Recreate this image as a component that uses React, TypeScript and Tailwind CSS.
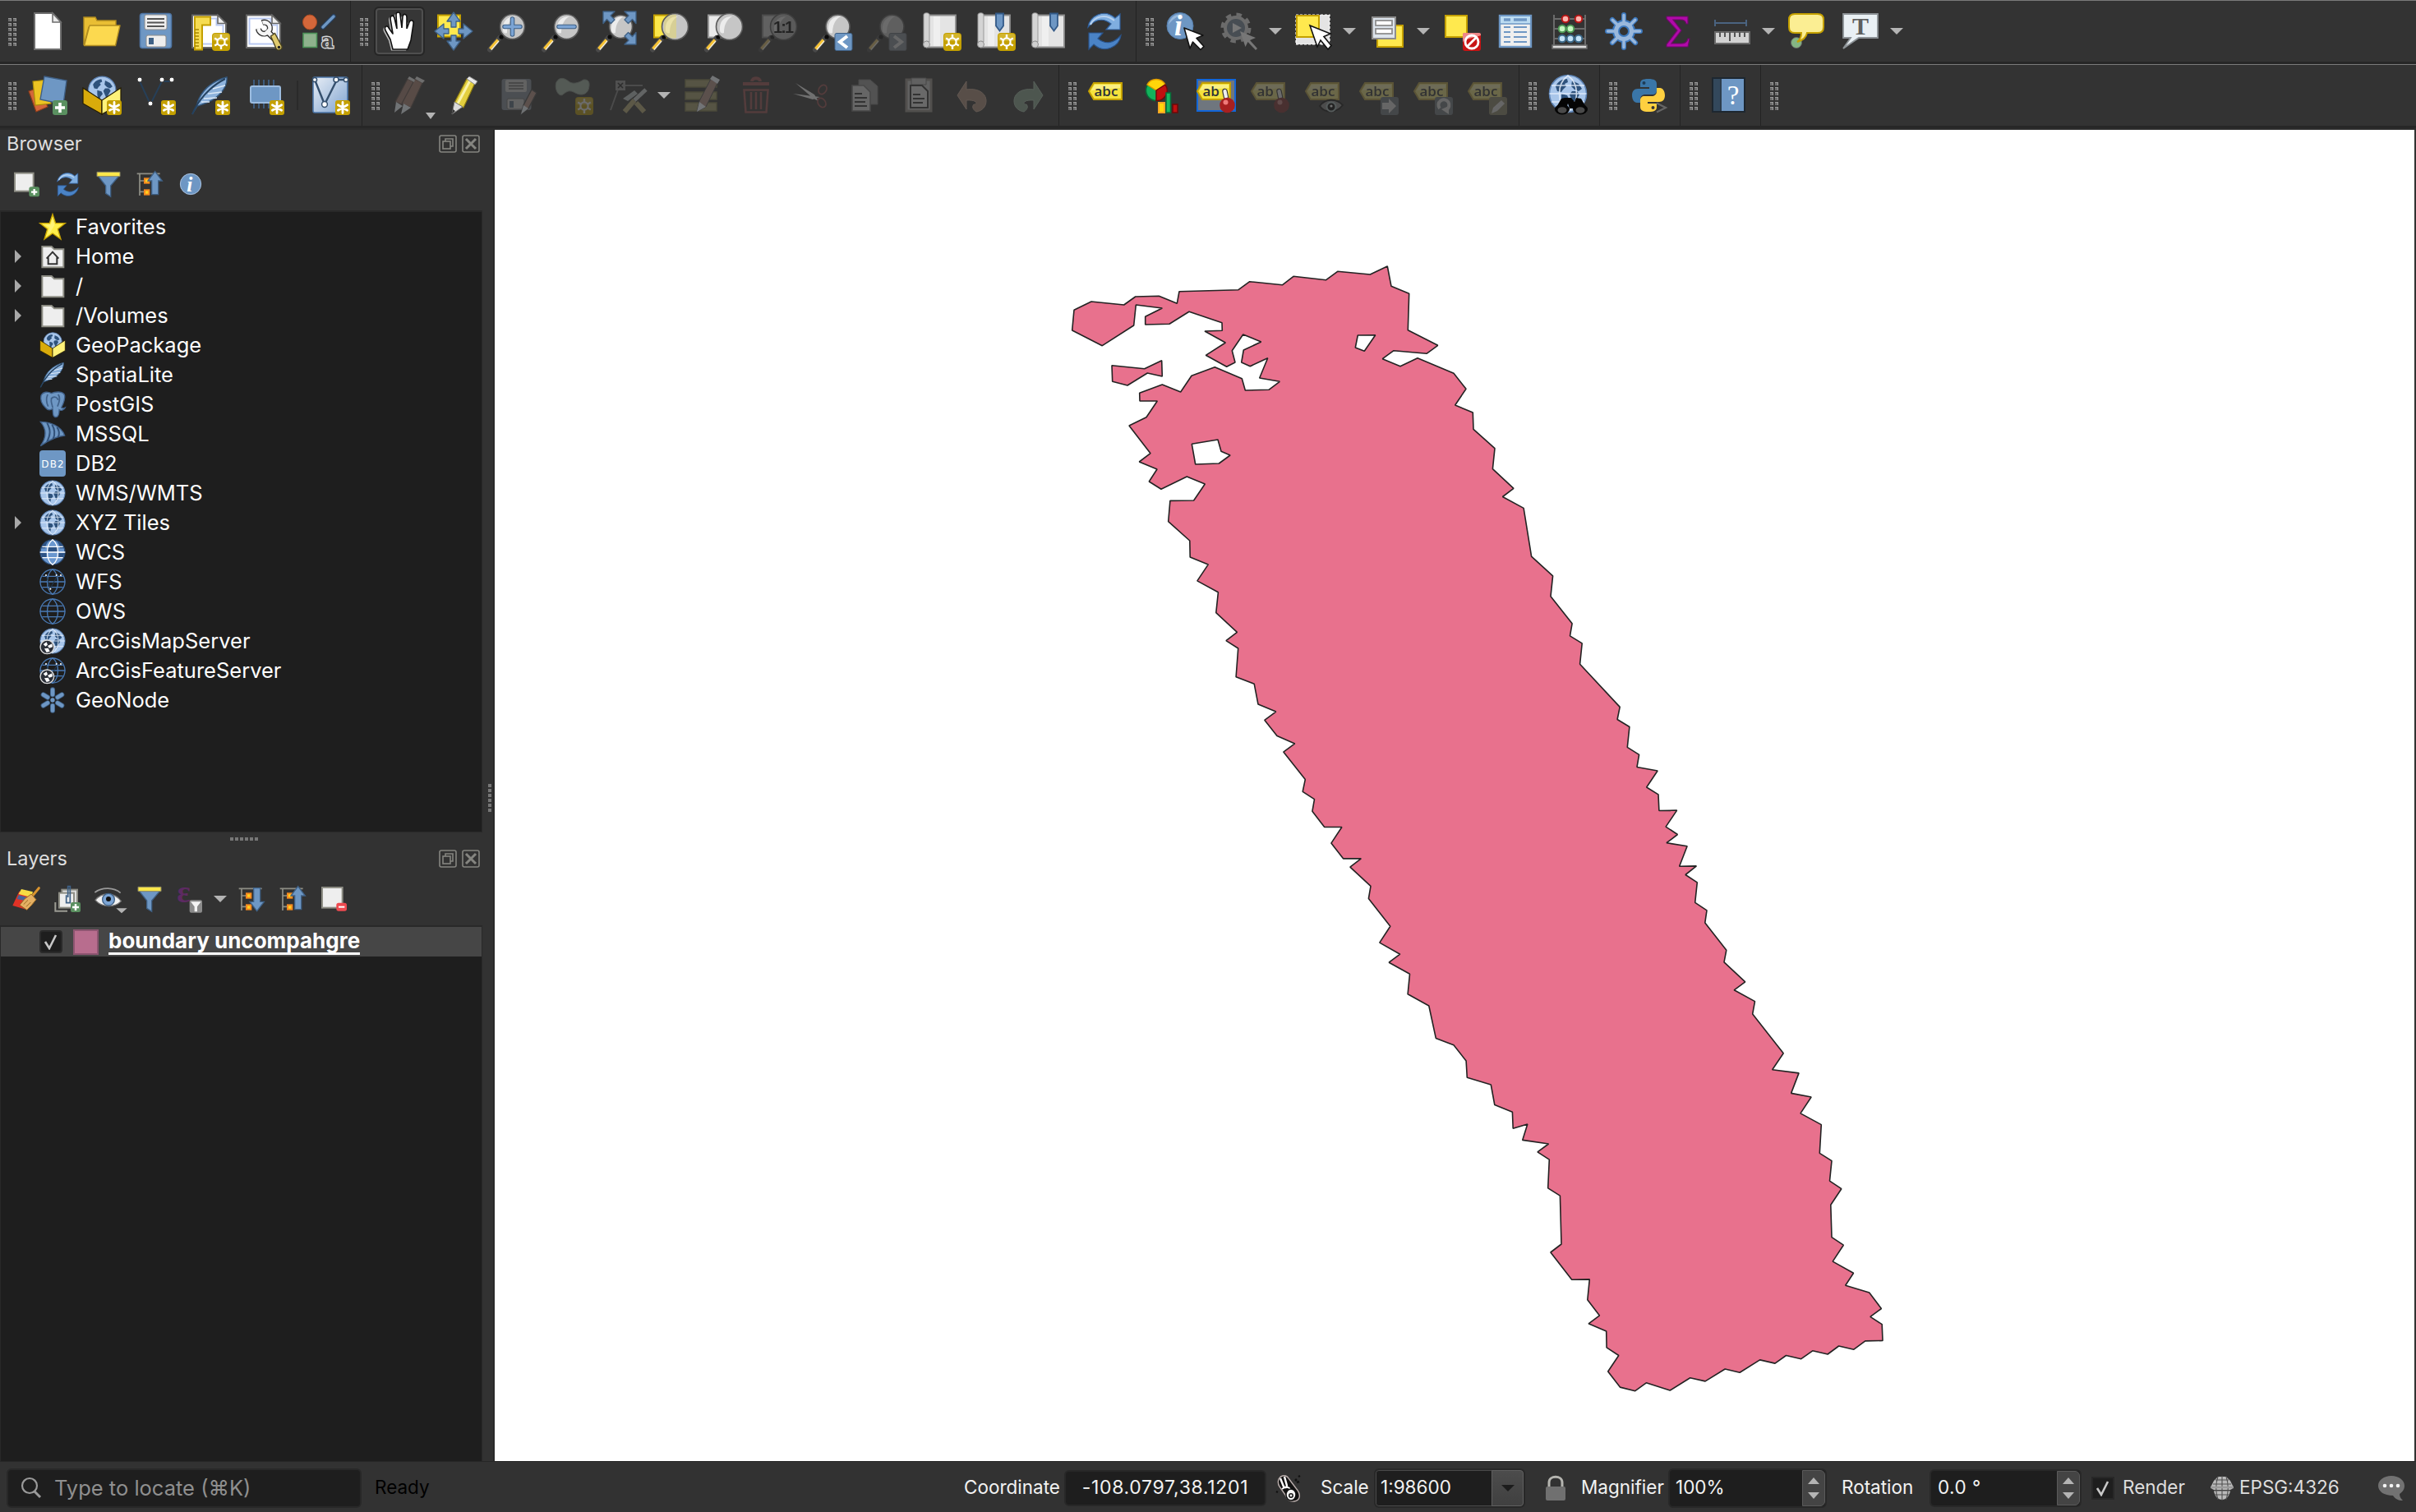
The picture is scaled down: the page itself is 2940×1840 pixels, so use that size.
import React from "react";

type P = { size?: number };
type Pt = [number, number];

const Svg = ({ size = 48, dim = false, children }: { size?: number; dim?: boolean; children: React.ReactNode }) => (
  <svg width={size} height={size} viewBox="0 0 48 48" className={dim ? "shrink-0 overflow-visible opacity-30 grayscale-[40%]" : "shrink-0 overflow-visible"} fill="none">
    {children}
  </svg>
);

/* ---------- shared icon parts ---------- */

const StarBadge = () => (
  <g>
    <rect x="30" y="30" width="18" height="18" rx="3" fill="#c4a000" />
    <path d="M39 32.5v13M33.4 35.8l11.2 6.4M33.4 42.2l11.2-6.4" stroke="#fff" strokeWidth="2.8" strokeLinecap="round" />
  </g>
);

const GearBadge = () => (
  <g>
    <rect x="26" y="26" width="22" height="22" rx="4" fill="#c4a000" />
    <rect x="27" y="27" width="20" height="9" rx="3" fill="#d3b52c" />
    <circle cx="37" cy="37" r="4.6" stroke="#fff" strokeWidth="2.2" />
    <path d="M37 28v5M37 41v5M29.2 32.5l4.3 2.5M40.5 39l4.3 2.5M29.2 41.5l4.3-2.5M40.5 35l4.3-2.5" stroke="#fff" strokeWidth="2.4" />
  </g>
);

const PlusBadge = () => (
  <g>
    <rect x="30" y="30" width="18" height="18" rx="3" fill="#5a9060" />
    <path d="M39 33v12M33 39h12" stroke="#fff" strokeWidth="3.6" />
  </g>
);

const Lens = ({ r = 15, fill = "#c6c6c6" }: { r?: number; fill?: string }) => (
  <g>
    <path d="M2 46.5L14 32" stroke="#494949" strokeWidth="6" strokeLinecap="round" />
    <path d="M2.5 45.5L12 34.5" stroke="#f7c335" strokeWidth="3.6" />
    <path d="M4 46.5L13 36" stroke="#f4f0e0" strokeWidth="1.2" />
    <circle cx="16" cy="31" r="2.6" fill="#0b0b0b" />
    <circle cx="29.5" cy="18.5" r={r} fill={fill} stroke="#5a5a5a" strokeWidth="1.6" />
    <path d="M18 23C17 12 23 6 33 6C27 9 23 16 23 26C21 27 18 26 18 23Z" fill="#f2f2f2" opacity=".85" />
  </g>
);

const Cursor = () => (
  <path d="M23 20l23 9-8 3.5 9 10-4 4-9.500-9.500-3.500 8z" fill="#fff" stroke="#111" strokeWidth="1.6" strokeLinejoin="round" />
);

const Tag = ({ text = "abc" }: { text?: string }) => (
  <g>
    <path d="M1 19L7 9h34v20H7z" fill="#f5e23c" stroke="#c4a000" strokeWidth="2" />
    <path d="M4 18l4-7h31v4z" fill="#fdf8b0" opacity=".6" />
    <text x="7.500" y="25" fontFamily="'Open Sans'" fontWeight="600" fontSize="17" fill="#2f3338">{text}</text>
  </g>
);

const Continents = ({ fill = "#2e527c" }: { fill?: string }) => (
  <g fill={fill}>
    <path d="M9 15c3-6 8-9 14-9l1 4-4 2 2 3-4 4-2 3-5-1z" />
    <path d="M16 24l7 2 2 4-4 5-1 5-3-2-1-7z" />
    <path d="M29 8l8 4 4 6-4 3-5-2-4-4z" />
    <path d="M29 21l6 0 3 4-4 7-3 5-3-7-2-5z" />
  </g>
);

const Globe = ({ grid = false }: { grid?: boolean }) => (
  <g>
    <circle cx="24" cy="24" r="22.500" fill="#a9c6ea" stroke="#5c82b3" strokeWidth="1.6" />
    <Continents />
    {grid && <path d="M4 14h40M1.500 24h45M4 34h40M24 2c-14 10-14 34 0 44c14-10 14-34 0-44z" stroke="#e6f0fb" strokeWidth="1.6" opacity=".85" />}
  </g>
);

/* ---------- project toolbar ---------- */

const NewFile = () => (
  <Svg>
    <path d="M8 2h22l10 11v33H8z" fill="#fff" stroke="#6e6e6e" strokeWidth="2" />
    <path d="M30 2v11h10z" fill="#e9e9e9" stroke="#6e6e6e" strokeWidth="1.6" />
  </Svg>
);
const OpenFolder = () => (
  <Svg>
    <path d="M2 41V7h14l2 4h23v8H8z" fill="#e9be33" stroke="#b18d20" strokeWidth="1.400" />
    <path d="M9 17h37l-5.500 24.500H2.500z" fill="#fcd94f" stroke="#b18d20" strokeWidth="1.400" strokeLinejoin="round" />
  </Svg>
);
const Save = () => (
  <Svg>
    <rect x="4.500" y="2.500" width="38" height="42" rx="3" fill="#6e97c4" stroke="#4f76a5" strokeWidth="1.600" />
    <rect x="10" y="4" width="27" height="18" rx="2" fill="#eee" stroke="#8a8a8a" />
    <path d="M13 9h21M13 13.500h21M13 18h21" stroke="#555" strokeWidth="1.800" />
    <rect x="12" y="29" width="24" height="14" rx="2" fill="#eee" stroke="#8a8a8a" />
    <rect x="15" y="32" width="6" height="8" fill="#3f6186" />
  </Svg>
);
const SaveEdits = () => (
  <Svg>
    <rect x="2.500" y="4" width="36" height="38" rx="3" fill="#4b4e52" />
    <rect x="7" y="5" width="26" height="15" rx="2" fill="#626262" />
    <path d="M11 9h18M11 12.500h18M11 16h18" stroke="#414141" strokeWidth="1.600" />
    <rect x="9" y="28" width="21" height="13" rx="2" fill="#626262" stroke="#454545" />
    <rect x="12" y="31" width="5" height="8" fill="#3e444a" />
    <path d="M26 47l3-11 10-19 6 4-10 19z" fill="#5c504c" stroke="#3a3a3a" strokeWidth="1.400" />
    <path d="M26 47l3-11 6 4z" fill="#6f7274" />
  </Svg>
);
const LayoutPage = () => (
  <g>
    <path d="M2 4.500h31l10 10V44H2z" fill="#fff" stroke="#666" strokeWidth="2" />
    <path d="M5.500 8.500h26v8h8v23h-34z" stroke="#b9c9f2" strokeWidth="2" />
    <path d="M33 4.500v10h10z" fill="#eee" stroke="#666" strokeWidth="1.600" />
  </g>
);
const NewLayout = () => (
  <Svg>
    <LayoutPage />
    <path d="M5 6.500h19v10H14v30H5z" fill="#f6dc52" stroke="#c4a000" strokeWidth="2" />
    <path d="M5 22h5M5 26h5M5 30h5M5 34h5M5 38h5M5 42h5" stroke="#a58500" strokeWidth="1.500" />
    <GearBadge />
  </Svg>
);
const LayoutManager = () => (
  <Svg>
    <LayoutPage />
    <g strokeLinecap="butt">
      <path d="M21 13.500a7 7 0 1 1-4.500 7.500" stroke="#333" strokeWidth="7" />
      <path d="M27 24l9 9" stroke="#333" strokeWidth="8" />
      <path d="M21.500 13.500a7 7 0 1 1-5 6.500" stroke="#f5f5f5" strokeWidth="4.400" />
      <path d="M26 23l10 10" stroke="#f5f5f5" strokeWidth="5" />
    </g>
    <path d="M31.500 30l5-3.500 8.500 16c1 4-5 6-7 2.500z" fill="#dfca6e" stroke="#4a431f" strokeWidth="1.400" />
    <circle cx="41.500" cy="43.500" r="1.800" fill="#222" />
  </Svg>
);
const StyleManager = () => (
  <Svg>
    <ellipse cx="13" cy="13" rx="8.500" ry="9" fill="#d4673a" stroke="#a84a22" />
    <path d="M29 19L42 6" stroke="#27405f" strokeWidth="6" strokeLinecap="round" />
    <path d="M29 19L42 6" stroke="#6e97c4" strokeWidth="3.500" strokeLinecap="round" />
    <rect x="5" y="26.500" width="16.500" height="17" fill="#8fb28d" stroke="#4c9257" strokeWidth="1.600" />
    <text x="27" y="44" fontFamily="'DejaVu Serif'" fontWeight="700" fontSize="25" fill="#444" stroke="#d8d8d8" strokeWidth="2.800" paintOrder="stroke" textLength="15" lengthAdjust="spacingAndGlyphs">a</text>
  </Svg>
);

/* ---------- navigation toolbar ---------- */

const HAND = "M16 46L13 34L7 23C5 18 9 16 11 20L16 27L13 9C13 4 17 4 18 8L21 21L20 4C20 0 25 0 25 4L27 20L28 6C29 2 33 3 33 7L33 21L36 13C38 9 42 11 41 15L38 35L34 46Z";
const Hand = () => (
  <Svg>
    <path d={HAND} fill="#bbb" transform="translate(-2 1.500)" />
    <path d={HAND} fill="#fff" stroke="#111" strokeWidth="1.600" strokeLinejoin="round" />
    <path d="M20 21v3M26.500 20v4M33 21l-.5 4" stroke="#fff" strokeWidth="3.500" />
  </Svg>
);
const Arrow4 = () => (
  <Svg>
    <rect x="5" y="4.500" width="27" height="26" fill="#ffe94e" stroke="#c4a000" strokeWidth="2" />
    <g fill="#6e97c4" stroke="#3f6186" strokeWidth="1.300" strokeLinejoin="round">
      <path d="M24 1l8 11h-5v7h-6v-7h-5z" />
      <path d="M24 47l8-11h-5v-7h-6v7h-5z" />
      <path d="M1 24l11-9v6h6v6h-6v6z" />
      <path d="M47 24l-11-9v6h-6v6h6v6z" />
    </g>
  </Svg>
);
const ZoomIn = () => (
  <Svg>
    <Lens />
    <path d="M29.500 9v19M20 18.500h19" stroke="#3f6186" strokeWidth="5.600" strokeLinecap="round" />
    <path d="M29.500 9v19M20 18.500h19" stroke="#7ba4d4" strokeWidth="3.400" strokeLinecap="round" />
  </Svg>
);
const ZoomOut = () => (
  <Svg>
    <Lens />
    <path d="M20 18.500h19" stroke="#3f6186" strokeWidth="5.600" strokeLinecap="round" />
    <path d="M20 18.500h19" stroke="#7ba4d4" strokeWidth="3.400" strokeLinecap="round" />
  </Svg>
);
const ZoomFull = () => (
  <Svg>
    <Lens r={14} />
    <g fill="#6e97c4" stroke="#3f6186" strokeWidth="1.300" strokeLinejoin="round">
      <path d="M8 0h14l-5 5 5 5-4.500 4.500-5-5-4.500 5z" />
      <path d="M48 0H34l5 5-5 5 4.500 4.500 5-5 4.500 5z" />
      <path d="M48 40H34l5-5-5-5 4.500-4.500 5 5 4.500-5z" />
    </g>
  </Svg>
);
const ZoomSel = () => (
  <Svg>
    <rect x="4" y="4.500" width="27" height="27" fill="#fbe74b" stroke="#c4a000" strokeWidth="2" />
    <Lens r={16} />
    <path d="M16 12c3-7 9-9 15-8v28c-6 2-13-1-15-8z" fill="#ead95c" opacity=".45" />
  </Svg>
);
const ZoomLayer = () => (
  <Svg>
    <rect x="4" y="4.500" width="27" height="27" fill="#eaeaea" stroke="#999" strokeWidth="2" />
    <Lens r={16} />
  </Svg>
);
const ZoomNative = () => (
  <Svg dim>
    <rect x="4" y="4.500" width="27" height="27" fill="#ccc" stroke="#888" strokeWidth="2" />
    <Lens r={16} fill="#b5b5b5" />
    <text x="17" y="26" fontFamily="'Liberation Sans'" fontWeight="700" fontSize="20" fill="#000" textLength="25">1:1</text>
  </Svg>
);
const ZoomLast = () => (
  <Svg>
    <Lens r={14.5} />
    <rect x="26" y="26.500" width="21" height="21" rx="2" fill="#6e97c4" stroke="#3f6186" />
    <path d="M41 30l-9 7 9 7" stroke="#fff" strokeWidth="4" />
  </Svg>
);
const ZoomNext = () => (
  <Svg dim>
    <Lens r={14.5} />
    <rect x="26" y="26.500" width="21" height="21" rx="2" fill="#7c8da0" stroke="#5f6b78" />
    <path d="M32 30l9 7-9 7" stroke="#ddd" strokeWidth="4" />
  </Svg>
);
const MapSheet = () => (
  <g>
    <path d="M8 4.500h33v39H6z" fill="#e4e4e4" stroke="#8e8e8e" strokeWidth="1.800" />
    <path d="M2 4c0-3 7-3 7 0v33c-4-2-7 0-7 4z" fill="#d4d4d4" stroke="#999" />
    <circle cx="5.500" cy="40" r="4" fill="#cfcfcf" stroke="#8e8e8e" />
    <path d="M14 6h8v36h-8z" fill="#f3f3f3" opacity=".7" />
  </g>
);
const Ribbon = () => <path d="M24 2.500h9v15l-4.500 6-4.500-6z" fill="#6e97c4" stroke="#335a88" strokeWidth="1.800" />;
const NewMapView = () => <Svg><MapSheet /><GearBadge /></Svg>;
const NewBookmark = () => <Svg><MapSheet /><Ribbon /><GearBadge /></Svg>;
const Bookmarks = () => <Svg><MapSheet /><Ribbon /></Svg>;
const Refresh = ({ size }: P) => (
  <Svg size={size}>
    <path d="M4 19C6 5 24-4 37 8l6-5v19H26l6-7C22 7 12 10 4 19z" fill="#7faee0" stroke="#2f5f9c" strokeWidth="1.200" />
    <path d="M44 29C42 43 24 52 11 40l-6 6V26h17l-6 7c10 8 20 5 28-4z" fill="#4a83c6" stroke="#2a548c" strokeWidth="1.200" />
    <path d="M7 16C12 6 25 2 36 11" stroke="#b9d3f0" strokeWidth="2" />
  </Svg>
);

/* ---------- attributes toolbar ---------- */

const Identify = () => (
  <Svg>
    <circle cx="18" cy="17.500" r="16" fill="#6e97c4" stroke="#557fae" />
    <path d="M4 16C6 6 14 2 22 4C14 6 8 10 4 16z" fill="#a9c6e6" opacity=".7" />
    <text x="11" y="29" fontFamily="'Liberation Serif'" fontWeight="700" fontStyle="italic" fontSize="35" fill="#fff">i</text>
    <Cursor />
  </Svg>
);
const InfoIcon = ({ size }: P) => (
  <Svg size={size}>
    <circle cx="24" cy="24" r="19" fill="#6e97c4" stroke="#a8c1de" strokeWidth="1.500" />
    <text x="17" y="37" fontFamily="'Liberation Serif'" fontWeight="700" fontStyle="italic" fontSize="38" fill="#fff">i</text>
  </Svg>
);
const RunAction = () => (
  <Svg>
    <circle cx="20" cy="20" r="13" fill="#474d53" stroke="#6b6b6b" strokeWidth="4" />
    <circle cx="20" cy="20" r="16.500" stroke="#6b6b6b" strokeWidth="4" strokeDasharray="6.500 6.460" />
    <path d="M16 14l11 6-11 6z" fill="#777" />
    <path d="M25 24l19 8-7 3 9 10-2 2-9.500-10-3 6z" fill="#777" />
  </Svg>
);
const SelectRect = () => (
  <Svg>
    <rect x="3" y="4" width="41" height="36" fill="#e4e4e4" stroke="#fff" strokeWidth="1.200" strokeDasharray="3 2" />
    <rect x="4" y="5" width="27" height="26" fill="#ffe94e" stroke="#c4a000" strokeWidth="2" />
    <path d="M20 17l25 10-8 3.500 9 11-4 4.500-9-11-4 8z" fill="#fff" stroke="#111" strokeWidth="1.600" />
  </Svg>
);
const SelectForm = () => (
  <Svg>
    <rect x="12" y="17" width="31" height="26" fill="#ffe94e" stroke="#c4a000" strokeWidth="2" />
    <rect x="6" y="7" width="28" height="26" fill="#dde4ec" stroke="#8e8e8e" strokeWidth="2" />
    <rect x="10" y="11" width="20" height="6" fill="#fff" stroke="#8e8e8e" strokeWidth="1.800" />
    <rect x="10" y="21" width="20" height="6" fill="#fff" stroke="#8e8e8e" strokeWidth="1.800" />
  </Svg>
);
const Deselect = () => (
  <Svg>
    <rect x="5" y="5" width="26" height="26" fill="#ffe94e" stroke="#c4a000" strokeWidth="2" />
    <rect x="26" y="26" width="22" height="22" rx="3" fill="#c81414" />
    <path d="M26 37c6-5 15-5 22-8v-1a2 2 0 0 0-2-2H28a2 2 0 0 0-2 2z" fill="#e88" />
    <circle cx="37" cy="37" r="8" stroke="#fff" strokeWidth="2.800" />
    <path d="M31.500 42.500l11-11" stroke="#fff" strokeWidth="2.800" />
  </Svg>
);
const Table = () => (
  <Svg>
    <rect x="5" y="5" width="38" height="38" fill="#efefef" stroke="#6e97c4" strokeWidth="2.400" />
    <rect x="6" y="6" width="36" height="9" fill="#bcdcf2" />
    <path d="M5 15h38" stroke="#6e97c4" strokeWidth="1.600" />
    <path d="M10 10h8M22 10h16" stroke="#6e97c4" strokeWidth="3.600" />
    <path d="M10 19h8M22 19h16M10 25h8M22 25h16M10 31h8M22 31h16M10 37h8M22 37h16" stroke="#6e97c4" strokeWidth="2" />
  </Svg>
);
const Abacus = () => (
  <Svg>
    <path d="M5 4v38M43 4v38M5 9h38M5 21h38M5 33h38" stroke="#6b6b6b" strokeWidth="2" />
    <rect x="3" y="41" width="42" height="4" fill="#ddd" stroke="#6b6b6b" strokeWidth="1.600" />
    <g strokeWidth="2">
      <circle cx="19" cy="9" r="4.300" fill="#ffb3ad" stroke="#b51616" />
      <circle cx="35" cy="9" r="4.300" fill="#ffb3ad" stroke="#b51616" />
      <circle cx="15" cy="21" r="4.300" fill="#c5f7c0" stroke="#4f9a55" />
      <circle cx="25" cy="21" r="4.300" fill="#c5f7c0" stroke="#4f9a55" />
      <circle cx="15" cy="33" r="4.300" fill="#c4e2f6" stroke="#3d6a8a" />
      <circle cx="25" cy="33" r="4.300" fill="#c4e2f6" stroke="#3d6a8a" />
      <circle cx="35" cy="33" r="4.300" fill="#c4e2f6" stroke="#3d6a8a" />
    </g>
  </Svg>
);
const Gear = () => (
  <Svg>
    <path d="M24 4v40M4 24h40M9.900 9.900l28.200 28.200M38.100 9.900L9.900 38.100" stroke="#3c78bd" strokeWidth="6" strokeLinecap="round" />
    <circle cx="24" cy="24" r="13" fill="#9ab8dc" stroke="#3c78bd" strokeWidth="2" />
    <path d="M24 4.500v39M4.500 24h39M10.200 10.200l27.600 27.600M37.800 10.200L10.200 37.800" stroke="#9ab8dc" strokeWidth="3.400" strokeLinecap="round" />
    <circle cx="24" cy="24" r="6" fill="#333" stroke="#3c78bd" strokeWidth="2" />
  </Svg>
);
const Sigma = () => (
  <Svg>
    <path d="M10 6h26v9h-2c-1-4-3-5-7-5H18l10 13-12 16h12c5 0 7-2 8-6h2l-2 10H10v-3l13-17L10 9z" fill="#b10aa9" stroke="#6d0a68" strokeWidth="1.200" />
  </Svg>
);
const Ruler = () => (
  <Svg>
    <path d="M3 10v8M41 10v8M3 14h38" stroke="#4a6380" strokeWidth="2" />
    <rect x="3" y="25" width="42" height="14" fill="#d2d2d2" stroke="#6b6b6b" strokeWidth="2" />
    <path d="M9 25v6M15 25v6M21 25v11M27 25v6M33 25v6M39 25v6" stroke="#555" strokeWidth="2" />
  </Svg>
);
const MapTip = () => (
  <Svg>
    <circle cx="12" cy="38" r="6.500" fill="#85b684" stroke="#666" />
    <path d="M10 3h28q7 0 7 7v9q0 7-7 7H25c-1 5-5 9-12 11 4-3 5-7 5-11h-8q-7 0-7-7v-9q0-7 7-7z" fill="#fbee93" stroke="#c4a000" strokeWidth="2" />
  </Svg>
);
const TextAnnotation = () => (
  <Svg>
    <path d="M3 3h42v29H22L3 45l9-13H3z" fill="#e9f0f4" stroke="#8c9296" strokeWidth="1.800" />
    <text x="24" y="28" textAnchor="middle" fontFamily="'Liberation Serif'" fontWeight="700" fontSize="30" fill="#5e5e5e">T</text>
  </Svg>
);

/* ---------- second toolbar row ---------- */

const DataSource = () => (
  <Svg>
    <path d="M1 19l14-5 9 24-14 6z" fill="#d4673a" stroke="#8e3d1b" strokeWidth="1.200" />
    <path d="M6 7l19-2 3 29-19 2z" fill="#ecc423" stroke="#a88a0a" strokeWidth="1.200" />
    <path d="M20 1l27 5-4 29-28-6z" fill="#6e97c4" stroke="#3f5f85" strokeWidth="1.400" />
    <PlusBadge />
  </Svg>
);
const GeoPackage = ({ size, badge = false }: P & { badge?: boolean }) => (
  <Svg size={size}>
    <g transform="translate(6.500 0) scale(.74)"><Globe /></g>
    <path d="M1 15l23 15v17L1 34z" fill="#d9ab0b" stroke="#241c00" strokeWidth="1.200" />
    <path d="M47 15L24 30v17l23-13z" fill="#fff27a" stroke="#241c00" strokeWidth="1.200" />
    {badge && <StarBadge />}
  </Svg>
);
const Shapefile = () => (
  <Svg>
    <path d="M4 7l13 28L31 7h12" stroke="#263f58" strokeWidth="2" />
    <g fill="#fff" stroke="#333">
      <circle cx="4" cy="5" r="3" /><circle cx="17" cy="34" r="3" /><circle cx="31" cy="5" r="3" /><circle cx="43" cy="5" r="3" />
    </g>
    <StarBadge />
  </Svg>
);
const Feather = ({ size, badge = false }: P & { badge?: boolean }) => (
  <Svg size={size}>
    <path d="M8 34C12 20 24 7 44 2C45 13 36 28 14 35L8 37C6 40 4 43 2 47" fill="#8db2dc" stroke="#35597f" strokeWidth="1.400" />
    <path d="M2 47C8 32 22 14 42 4" stroke="#24415f" strokeWidth="2" />
    <path d="M16 28l16-1M21 22l17-2M27 16l15-4M13 32l10 0" stroke="#dbe8f6" strokeWidth="1.500" />
    {badge && <StarBadge />}
  </Svg>
);
const MemoryLayer = () => (
  <Svg>
    <path d="M11 5v8M17 5v8M23 5v8M29 5v8M35 5v8M11 34v6M17 34v6M23 34v6M29 34v6" stroke="#3f6186" strokeWidth="1.800" />
    <rect x="7" y="13" width="36" height="20" rx="2" fill="#6e97c4" stroke="#9dbde0" strokeWidth="2" />
    <StarBadge />
  </Svg>
);
const VirtualLayer = () => (
  <Svg>
    <defs>
      <linearGradient id="vl" x1="0" y1="0" x2="1" y2="1"><stop offset="0" stopColor="#e8eef6" /><stop offset="1" stopColor="#7fa3cf" /></linearGradient>
    </defs>
    <rect x="3" y="2" width="42" height="43" rx="2" fill="url(#vl)" stroke="#4c76a8" strokeWidth="1.600" />
    <path d="M5 5l12 30L32 5h12" stroke="#35506e" strokeWidth="2.400" />
    <g fill="#fff" stroke="#35506e" strokeWidth="1.500">
      <circle cx="5" cy="5" r="2.600" /><circle cx="17" cy="35" r="3.400" /><circle cx="31" cy="5" r="3" /><circle cx="43" cy="5" r="2.600" />
    </g>
    <StarBadge />
  </Svg>
);
const EditsMenu = () => (
  <>
    <Svg>
      <g stroke="#403b39" strokeWidth="1.200">
        <path d="M5 32L20 4l8 4-13 28z" fill="#564a46" />
        <path d="M13 34L29 4l9 5-14 30z" fill="#584b46" />
      </g>
      <path d="M20 4l2-3 7 4-1 3zM29 4l2-3 10 5-3 3z" fill="#6e6e6e" />
      <path d="M4 45l2-13 8 5zM12 47l3-13 9 5z" fill="#707375" />
    </Svg>
    <span className="absolute bottom-0 right-[3px] border-x-[6px] border-t-[8px] border-x-transparent border-t-[#b4b4b4]" />
  </>
);
const Pencil = () => (
  <Svg>
    <path d="M11 33L26 4l10 5-14 30z" fill="#e3cf3f" stroke="#8d7b10" strokeWidth="1.200" />
    <path d="M15 34L30 6" stroke="#f9f3a8" strokeWidth="3" />
    <path d="M26 4l3-3 10 6-3 4z" fill="#e8e8e8" stroke="#888" />
    <path d="M8 47l3-15 10 6z" fill="#dcdcdc" stroke="#777" />
    <path d="M8 47l1-6 3 2z" fill="#333" />
  </Svg>
);
const AddFeature = () => (
  <Svg>
    <path d="M3 8c4-7 10-5 15-1s12 2 18-2c8-1 8 6 6 12s-9 8-16 4-10-2-15 2-11-7-8-15z" fill="#545a55" stroke="#4b4f4c" />
    <g opacity=".28"><GearBadge /></g>
  </Svg>
);
const VertexTool = () => (
  <Svg>
    <path d="M12 17L3 42M19 12h23" stroke="#4b4b4b" strokeWidth="2" />
    <rect x="9" y="6" width="12" height="12" fill="#505050" />
    <path d="M12 9l6 6M18 9l-6 6" stroke="#2d2d2d" strokeWidth="1.600" />
    <path d="M20 44l12-14" stroke="#5c5847" strokeWidth="6" />
    <path d="M32 30l14-13" stroke="#626464" strokeWidth="5" />
    <path d="M34 33l10 11" stroke="#5c5847" strokeWidth="6" />
    <path d="M18 28l14-10 4 4-12 9z" fill="#5d6060" />
  </Svg>
);
const ModifyAttrs = () => (
  <Svg>
    <g fill="#565444" stroke="#4b4a3a" strokeWidth="1.500"><path d="M4 5h38v9H4zM4 20h38v9H4zM4 33h38v10H4z" /></g>
    <path d="M18 44l3-13L35 4l8 5-14 29z" fill="#5b504c" stroke="#3b3b3b" />
    <path d="M34 4l3-4 9 5-3 5zM18 44l3-12 8 6z" fill="#727476" />
  </Svg>
);
const Trash = () => (
  <Svg>
    <path d="M8 10h32M19 7c0-5 10-5 10 0" stroke="#533c3c" strokeWidth="4" />
    <path d="M9.500 17.500h29l-2 27h-25zM18 20v21M24 20v21M30 20v21" stroke="#533c3c" strokeWidth="2.600" />
  </Svg>
);
const Cut = () => (
  <Svg>
    <path d="M3 22l24 3 9 1-9 3zM6 9l23 14 5 8-6-3z" fill="#707070" />
    <ellipse cx="39" cy="17" rx="4.500" ry="6" transform="rotate(35 39 17)" stroke="#533c3c" strokeWidth="1.800" />
    <ellipse cx="38" cy="33" rx="4.500" ry="6" transform="rotate(-35 38 33)" stroke="#533c3c" strokeWidth="1.800" />
  </Svg>
);
const Copy = () => (
  <Svg dim>
    <path d="M17 5h14l9 8v22H17z" fill="#999" stroke="#777" />
    <path d="M9 12h14l8 8v23H9z" fill="#ddd" stroke="#777" strokeWidth="1.600" />
    <path d="M12 22h9M12 27h15M12 32h13M12 37h15" stroke="#333" strokeWidth="2.200" />
  </Svg>
);
const Paste = () => (
  <Svg dim>
    <rect x="9" y="5" width="30" height="38" fill="#ccc" stroke="#998f85" strokeWidth="3" />
    <path d="M15 3h18v8H15z" fill="#ccc" stroke="#777" />
    <path d="M14 12h14l7 7v20H14z" fill="#e5e5e5" stroke="#333" strokeWidth="2" />
    <path d="M17 23h9M17 28h14M17 33h12" stroke="#333" strokeWidth="2.200" />
  </Svg>
);
const UndoShape = () => <path d="M5 24L16 7v10c12-2 24 3 24 14 0 7-5 12-12 13-5-3-5-7-3-9 4 1 6-6-9-5v11z" />;
const Undo = () => <Svg><g fill="#584e48" stroke="#625852"><UndoShape /></g></Svg>;
const Redo = () => <Svg><g fill="#4d564f" stroke="#58605a" transform="matrix(-1 0 0 1 48 0)"><UndoShape /></g></Svg>;

const LabelAbc = () => <Svg><Tag /></Svg>;
const Diagram = () => (
  <Svg>
    <circle cx="17" cy="18" r="12.500" fill="#12b35c" stroke="#0a6a38" strokeWidth="1.600" />
    <path d="M17 18L6 11A12.500 12.500 0 0 1 28 11z" fill="#ffd60a" stroke="#e09b00" strokeWidth="1.400" />
    <path d="M17 18L28 11A12.500 12.500 0 0 1 17 30.500z" fill="#c01010" stroke="#6d0a0a" strokeWidth="1.400" />
    <rect x="20" y="33" width="7" height="12" fill="#ffd60a" stroke="#f5a623" strokeWidth="2" />
    <rect x="29" y="21" width="5.500" height="24" fill="#16b860" stroke="#0a6a38" strokeWidth="1.600" />
    <rect x="37" y="35" width="6" height="10" fill="#c01010" stroke="#6d0a0a" strokeWidth="1.600" />
  </Svg>
);
const Pin = () => (
  <g>
    <path d="M34.500 19l1.500 7" stroke="#333" strokeWidth="6.500" strokeLinecap="round" />
    <path d="M34.500 19l1.500 7" stroke="#eee" strokeWidth="4.200" strokeLinecap="round" />
    <circle cx="37.500" cy="36" r="9.300" fill="#a82020" />
    <circle cx="35.500" cy="32.500" r="3" fill="#f07a7a" />
  </g>
);
const PinLabelsOn = () => (
  <Svg>
    <rect x="1" y="5" width="46" height="38" fill="#6f767e" stroke="#1266d8" strokeWidth="2" />
    <Tag text="ab" />
    <Pin />
  </Svg>
);
const PinLabel = () => <Svg dim><Tag text="ab" /><Pin /></Svg>;
const ShowLabel = () => (
  <Svg dim><Tag /><path d="M18 37c6-9 20-10 28-1-8 10-22 10-28 1z" fill="#888" stroke="#111" strokeWidth="2" /><circle cx="32" cy="38" r="5.500" fill="#000" stroke="#9bb" strokeWidth="2" /><circle cx="32" cy="37" r="1.600" fill="#fff" /></Svg>
);
const MoveLabel = () => (
  <Svg dim><Tag /><rect x="26" y="26" width="22" height="22" rx="3" fill="#6a7684" /><path d="M28 33h8v-5l9 9-9 9v-5h-8z" fill="#ddd" /></Svg>
);
const RotateLabel = () => (
  <Svg dim><Tag /><rect x="26" y="26" width="22" height="22" rx="3" fill="#6a7684" /><path d="M32 40a6.500 6.500 0 1 1 8 1.500" stroke="#ddd" strokeWidth="4" /><path d="M34 41l9-4v10z" fill="#ddd" /></Svg>
);
const ChangeLabel = () => (
  <Svg dim><Tag /><rect x="26" y="26" width="22" height="22" rx="3" fill="#8d8256" /><path d="M29 46l2-7 10-9 4 4-9 9z" fill="#ddd" /></Svg>
);
const MetaSearch = () => (
  <Svg>
    <g transform="translate(0 -2)"><Globe grid /></g>
    <g fill="#050505">
      <path d="M20 27h8l4 5 2-5 6 1 7 12H26l-2-6-2 6H9l7-12 4-1z" />
      <ellipse cx="17" cy="41" rx="9" ry="6.500" /><ellipse cx="39" cy="41" rx="9" ry="6.500" />
    </g>
    <ellipse cx="17" cy="42" rx="5.500" ry="3.800" fill="#4a4a4a" /><ellipse cx="39" cy="42" rx="5.500" ry="3.800" fill="#4a4a4a" />
  </Svg>
);
const PY = "M24 4c-8 0-10 2-10 6v4h11v2H11c-4.500 0-7 3-7 8s2.500 9 6 9h4v-4c0-4 3-6 6-6h9c3 0 5-2 5-5v-8c0-4-3-6-10-6z";
const Python = () => (
  <Svg>
    <path d={PY} fill="#3a76a8" />
    <path d={PY} fill="#ffd040" transform="rotate(180 24 24)" />
    <circle cx="18.500" cy="9" r="2" fill="#1d3c57" />
    <circle cx="29.500" cy="39" r="2" fill="#333" />
    <path d="M34 33.500l11 5.500-11 5.500" stroke="#666" strokeWidth="2.200" />
  </Svg>
);
const Help = () => (
  <Svg>
    <rect x="4" y="3" width="39" height="41" fill="#6e97c4" stroke="#1d2730" strokeWidth="2" />
    <path d="M5 4h8v39H5z" fill="#33485c" />
    <path d="M14 4v39" stroke="#1d2730" strokeWidth="1.600" />
    <text x="29" y="35" textAnchor="middle" fontFamily="'Liberation Serif'" fontSize="33" fill="#fff">?</text>
  </Svg>
);

/* ---------- toolbars ---------- */

const Handle = () => (
  <div className="grid w-[10px] shrink-0 translate-y-px grid-cols-2 gap-[2px]">
    {Array.from({ length: 12 }, (_, i) => (
      <span key={i} className="size-1 bg-[#6f6f6f] shadow-[inset_-1px_1px_0_#999]" />
    ))}
  </div>
);

const Tb = ({ children, menu = false, active = false }: { children: React.ReactNode; menu?: boolean; active?: boolean }) => (
  <div className={menu ? "flex w-[90px] shrink-0 items-center" : "flex w-[66px] shrink-0 items-center"}>
    <div className={active ? "relative mx-[2px] flex h-[60px] w-[62px] items-center justify-center rounded-md border-2 border-[#262626] bg-[#363636] shadow-[inset_0_0_0_2px_#4f4f4f]" : "relative flex h-[58px] w-[66px] items-center justify-center"}>
      {children}
    </div>
    {menu && <span className="ml-[3px] border-x-8 border-t-8 border-x-transparent border-t-[#b4b4b4]" />}
  </div>
);

const Group = ({ children, first = false, last = false }: { children?: React.ReactNode; first?: boolean; last?: boolean }) => (
  <div className={last ? "flex h-full grow items-center" : "flex h-full shrink-0 items-center border-r border-[#232323] pr-[5px]"}>
    <div className={first ? "w-[25px] shrink-0 pl-[10px]" : "w-[26px] shrink-0 pl-[11px]"}><Handle /></div>
    {children}
  </div>
);

const row = "flex h-[78px] items-stretch border-t border-b-[3px] border-t-[#7b7b7b] border-b-[#272727] bg-[#333333]";

const Toolbars = () => (
  <header className="h-[158px] shrink-0 bg-[#2c2c2c]">
    <div className={row}>
      <Group first>
        <Tb><NewFile /></Tb><Tb><OpenFolder /></Tb><Tb><Save /></Tb><Tb><NewLayout /></Tb><Tb><LayoutManager /></Tb><Tb><StyleManager /></Tb>
      </Group>
      <Group>
        <Tb active><Hand /></Tb><Tb><Arrow4 /></Tb><Tb><ZoomIn /></Tb><Tb><ZoomOut /></Tb><Tb><ZoomFull /></Tb><Tb><ZoomSel /></Tb><Tb><ZoomLayer /></Tb>
        <Tb><ZoomNative /></Tb><Tb><ZoomLast /></Tb><Tb><ZoomNext /></Tb><Tb><NewMapView /></Tb><Tb><NewBookmark /></Tb><Tb><Bookmarks /></Tb><Tb><Refresh /></Tb>
      </Group>
      <Group last>
        <Tb><Identify /></Tb><Tb menu><RunAction /></Tb><Tb menu><SelectRect /></Tb><Tb menu><SelectForm /></Tb><Tb><Deselect /></Tb><Tb><Table /></Tb>
        <Tb><Abacus /></Tb><Tb><Gear /></Tb><Tb><Sigma /></Tb><Tb menu><Ruler /></Tb><Tb><MapTip /></Tb><Tb menu><TextAnnotation /></Tb>
      </Group>
    </div>
    <div className={row}>
      <Group first>
        <Tb><DataSource /></Tb><Tb><GeoPackage badge /></Tb><Tb><Shapefile /></Tb><Tb><Feather badge /></Tb><Tb><MemoryLayer /></Tb>
        <div className="mx-[6px] h-9 w-[2px] bg-[#2a2a2a]" />
        <Tb><VirtualLayer /></Tb>
      </Group>
      <Group>
        <Tb><EditsMenu /></Tb><Tb><Pencil /></Tb><Tb><SaveEdits /></Tb><Tb><AddFeature /></Tb><Tb menu><VertexTool /></Tb><Tb><ModifyAttrs /></Tb>
        <Tb><Trash /></Tb><Tb><Cut /></Tb><Tb><Copy /></Tb><Tb><Paste /></Tb><Tb><Undo /></Tb><Tb><Redo /></Tb>
      </Group>
      <Group>
        <Tb><LabelAbc /></Tb><Tb><Diagram /></Tb><Tb><PinLabelsOn /></Tb><Tb><PinLabel /></Tb><Tb><ShowLabel /></Tb><Tb><MoveLabel /></Tb><Tb><RotateLabel /></Tb><Tb><ChangeLabel /></Tb>
      </Group>
      <Group><Tb><MetaSearch /></Tb></Group>
      <Group><Tb><Python /></Tb></Group>
      <Group><Tb><Help /></Tb></Group>
      <Group last />
    </div>
  </header>
);

/* ---------- dock icons ---------- */

const AddLayerSm = () => (
  <Svg size={32}>
    <rect x="3" y="4" width="34" height="33" fill="#eee" stroke="#8e8e85" strokeWidth="3" />
    <rect x="29" y="29" width="19" height="18" rx="4" fill="#5a9060" />
    <path d="M38.500 33v11M33 38.500h11" stroke="#fff" strokeWidth="3.600" />
  </Svg>
);
const Funnel = () => (
  <Svg size={32}>
    <path d="M4 8L19 27v14l9 6V27L44 8z" fill="#6e97c4" stroke="#3f6186" strokeWidth="2" />
    <path d="M3 2h42v8H3z" fill="#fbe74b" stroke="#8b8660" strokeWidth="1.500" />
  </Svg>
);
const TreeArrow = ({ up = false }: { up?: boolean }) => (
  <Svg size={32}>
    <path d="M1 5h42M6 5v40M6 18h9M6 38h9" stroke="#8e8e85" strokeWidth="2.600" />
    <rect x="15" y="14" width="8" height="8" fill="#ffd21e" stroke="#f5891f" strokeWidth="3" />
    <rect x="15" y="35" width="8" height="8" fill="#ffd21e" stroke="#f5891f" strokeWidth="3" />
    <path d={up ? "M34 1l13 17h-7v25H28V18h-7z" : "M34 46l13-17h-7V4H28v25h-7z"} fill="#6e97c4" stroke="#3f6186" strokeWidth="2" />
  </Svg>
);
const Brush = () => (
  <Svg size={32}>
    <path d="M11 10l26 6-11 28-27-8z" fill="#e03226" />
    <path d="M15 6l21 5-3 10-23-6z" fill="#f6dc45" />
    <path d="M10 17l20 5-3 6-20-4z" fill="#48639a" />
    <path d="M32 22L47 4" stroke="#d9942f" strokeWidth="4.500" strokeLinecap="round" />
    <path d="M21 24l12-9 9 10-9 11-8 8-13-9z" fill="#e5b063" stroke="#9c6a22" strokeWidth="1.500" />
    <path d="M19 34l8-8M24 38l8-8" stroke="#9c6a22" strokeWidth="1.500" />
  </Svg>
);
const AddGroup = () => (
  <Svg size={32}>
    <path d="M2 30v16h22" stroke="#9b9b93" strokeWidth="3" />
    <rect x="14" y="7" width="28" height="28" fill="#ddd" stroke="#8e8e85" strokeWidth="3" />
    <rect x="9" y="13" width="27" height="27" fill="#eee" stroke="#8e8e85" strokeWidth="3" />
    <path d="M22 17v14h7V1h-4v20" stroke="#3f6186" strokeWidth="2.600" />
    <PlusBadge />
  </Svg>
);
const Eye = () => (
  <Svg size={32}>
    <path d="M-1 12C12 2 34 2 46 13" stroke="#999" strokeWidth="2.500" />
    <path d="M0 26C12 11 35 11 47 28C36 40 12 40 0 26z" fill="#f2f2f2" stroke="#777" strokeWidth="2" />
    <circle cx="24" cy="25" r="11" fill="#7ba4d4" stroke="#3f6186" strokeWidth="2" />
    <circle cx="24" cy="24" r="4.500" fill="#111" />
    <path d="M38 41h20l-10 9z" fill="#b4b4b4" />
  </Svg>
);
const ExprFilter = () => (
  <Svg size={32}>
    <text x="-1" y="30" fontFamily="'Liberation Serif'" fontWeight="700" fontSize="58" fill="#5d2a62">ε</text>
    <rect x="22" y="26" width="23" height="23" rx="3" fill="#8b8b8b" />
    <path d="M24 29h19l-7 9v9h-5v-9z" fill="#f3f3f3" />
  </Svg>
);
const RemoveLayer = () => (
  <Svg size={32}>
    <rect x="3" y="3" width="37" height="37" fill="#eee" stroke="#8e8e85" strokeWidth="3" />
    <rect x="29" y="31" width="19" height="15" rx="4" fill="#ee4a50" />
    <path d="M33 38.500h11" stroke="#fff" strokeWidth="3" />
  </Svg>
);

const Star = () => (
  <Svg size={32}>
    <path d="M24 1l5.500 16.500H47L33.500 28l5.500 18.500L24 36 9 46.500 14.500 28 1 17.500h17.500z" fill="#ffef4a" stroke="#c4a000" strokeWidth="2" />
    <path d="M24 9l3.500 12-9 15-3 1 3-11-9-6h11z" fill="#fff79a" opacity=".6" />
  </Svg>
);
const Folder = ({ home = false }: { home?: boolean }) => (
  <Svg size={32}>
    <path d="M5 6h17l5 5h17v33H5z" fill="#eee" stroke="#8e8e85" strokeWidth="3" />
    {home && <path d="M13 28l11-12 11 12M16 26v12h16V26" stroke="#333" strokeWidth="3" />}
  </Svg>
);
const Postgres = () => (
  <Svg size={32}>
    <path d="M3 8C7 0 16 1 22 4c5-3 22-5 24 4 1 8-3 16-6 22 2 2 5 1 7 0-2 5-8 6-11 4 0 4 0 9-3 12-4 3-8 0-8-4l-1-10c-5 4-9 3-13-2C5 24 1 16 3 8z" fill="#6e97c4" stroke="#40618a" strokeWidth="2" />
    <path d="M15 6c-3 7-2 16 1 22M34 6c5 6 2 14-1 22M23 12c-4 5 0 10 1 18M21 14c5-5 11-4 13 2" stroke="#40618a" strokeWidth="2.600" />
  </Svg>
);
const Mssql = () => (
  <Svg size={32}>
    <path d="M2 2c17 0 38 8 44 25-13 1-30 9-44 19 10-14 12-30 0-44z" fill="#6e97c4" stroke="#40618a" strokeWidth="2" />
    <path d="M14 4c7 13 6 22 0 34M23 7c6 10 6 17 2 26M32 12c5 7 5 12 2 18" stroke="#32527a" strokeWidth="3" />
  </Svg>
);
const Db2 = () => (
  <Svg size={32}>
    <rect x="0" y="0" width="48" height="48" rx="6" fill="#6e97c4" />
    <text x="24" y="31" textAnchor="middle" fontFamily="'DejaVu Sans'" fontSize="18" fill="#fff" textLength="41">DB2</text>
  </Svg>
);
const GRID = "M5 14h38M1 24h46M5 34h38M24 1c-13 10-13 36 0 46c13-10 13-36 0-46z";
const GlobeSm = () => <Svg size={32}><Globe grid /></Svg>;
const WireGlobe = ({ nodes = false }: { nodes?: boolean }) => (
  <g>
    <circle cx="24" cy="24" r="22.500" stroke="#4a7ab5" strokeWidth="2" />
    <path d={GRID} stroke="#4a7ab5" strokeWidth="2" />
    {nodes && <g><path d="M12 12l8 24L33 12" stroke="#23394f" strokeWidth="1.600" /><circle cx="12" cy="12" r="1.600" fill="#fff" /><circle cx="31" cy="12" r="1.600" fill="#fff" /><circle cx="39" cy="12" r="1.600" fill="#fff" /><circle cx="20" cy="37" r="1.600" fill="#fff" /></g>}
  </g>
);
const Wcs = () => (
  <Svg size={32}>
    <circle cx="24" cy="24" r="22.500" fill="#6a97cf" stroke="#2a4a74" strokeWidth="2" />
    <path d="M3 17c3-8 8-12 14-14-5 6-6 10-6 14zM45 17c-3-8-8-12-14-14 5 6 6 10 6 14zM2 25h11v9H5zM46 25H35v9h8zM14 14h20v9H14z" fill="#2d5385" />
    <path d={GRID} stroke="#fff" strokeWidth="2" />
  </Svg>
);
const Wfs = () => <Svg size={32}><WireGlobe nodes /></Svg>;
const Ows = () => <Svg size={32}><WireGlobe /></Svg>;
const EsriMark = () => (
  <g>
    <circle cx="14" cy="35" r="12.500" fill="#2b2f38" stroke="#ddd" strokeWidth="2" />
    <path d="M7 30l6-4 2 5-4 3zM15 33l8-4 1 6-6 2zM9 38l7-1 3 6-6 2z" fill="#fff" />
  </g>
);
const ArcMap = () => <Svg size={32}><Globe grid /><EsriMark /></Svg>;
const ArcFeature = () => <Svg size={32}><WireGlobe nodes /><EsriMark /></Svg>;
const GeoNode = () => (
  <Svg size={32}>
    <g stroke="#3f6186" strokeWidth="9" strokeLinecap="round"><path d="M24 5v9M24 34v9M7 14l8 5M33 29l8 5M7 34l8-5M33 19l8-5" /></g>
    <g stroke="#6e97c4" strokeWidth="6.500" strokeLinecap="round"><path d="M24 5v9M24 34v9M7 14l8 5M33 29l8 5M7 34l8-5M33 19l8-5" /></g>
    <circle cx="24" cy="24" r="4" fill="#6e97c4" />
  </Svg>
);

/* ---------- left docks ---------- */

const DockTitle = ({ title }: { title: string }) => (
  <div className="flex h-[34px] shrink-0 items-center justify-between pl-2 pr-[3px] text-[#dedede]">
    <span className="text-[23.5px] leading-none">{title}</span>
    <div className="flex gap-[6px]">
      <svg width="22" height="22" viewBox="0 0 22 22" fill="none" stroke="#858580" strokeWidth="1.600">
        <rect x="1" y="1" width="20" height="20" rx="2" /><path d="M8 8V5h9v9h-3" /><rect x="5" y="8" width="9" height="9" />
      </svg>
      <svg width="22" height="22" viewBox="0 0 22 22" fill="none" stroke="#858580" strokeWidth="1.600">
        <rect x="1" y="1" width="20" height="20" rx="2" /><path d="M5 5l12 12M17 5L5 17" strokeWidth="3" />
      </svg>
    </div>
  </div>
);

const Small = ({ children }: { children: React.ReactNode }) => <div className="flex w-[50px] shrink-0 justify-center">{children}</div>;

const ITEMS: { label: string; icon: React.ReactNode; open?: boolean }[] = [
  { label: "Favorites", icon: <Star /> },
  { label: "Home", icon: <Folder home />, open: true },
  { label: "/", icon: <Folder />, open: true },
  { label: "/Volumes", icon: <Folder />, open: true },
  { label: "GeoPackage", icon: <GeoPackage size={32} /> },
  { label: "SpatiaLite", icon: <Feather size={32} /> },
  { label: "PostGIS", icon: <Postgres /> },
  { label: "MSSQL", icon: <Mssql /> },
  { label: "DB2", icon: <Db2 /> },
  { label: "WMS/WMTS", icon: <GlobeSm /> },
  { label: "XYZ Tiles", icon: <GlobeSm />, open: true },
  { label: "WCS", icon: <Wcs /> },
  { label: "WFS", icon: <Wfs /> },
  { label: "OWS", icon: <Ows /> },
  { label: "ArcGisMapServer", icon: <ArcMap /> },
  { label: "ArcGisFeatureServer", icon: <ArcFeature /> },
  { label: "GeoNode", icon: <GeoNode /> },
];

const Docks = () => (
  <aside className="flex w-[587px] shrink-0 flex-col">
    <DockTitle title="Browser" />
    <div className="flex h-16 shrink-0 items-center pl-[7px]">
      <Small><AddLayerSm /></Small><Small><Refresh size={31} /></Small><Small><Funnel /></Small><Small><TreeArrow up /></Small><Small><InfoIcon size={32} /></Small>
    </div>
    <div className="h-[757px] shrink-0 border border-t-2 border-[#292929] bg-[#1e1e1e]">
      {ITEMS.map((it) => (
        <div key={it.label} className="flex h-9 items-center pl-[17px] text-white">
          <span className="flex w-[30px] shrink-0">
            {it.open && <span className="border-y-8 border-l-8 border-y-transparent border-l-[#a9a9a9]" />}
          </span>
          {it.icon}
          <span className="ml-3 whitespace-nowrap text-[25.5px] leading-none">{it.label}</span>
        </div>
      ))}
    </div>
    <div className="flex h-[15px] shrink-0 items-center justify-center gap-[2px] pl-[7px]">
      {Array.from({ length: 6 }, (_, i) => <span key={i} className="size-1 bg-[#777]" />)}
    </div>
    <DockTitle title="Layers" />
    <div className="flex h-16 shrink-0 items-center pl-[7px]">
      <Small><Brush /></Small><Small><AddGroup /></Small><Small><Eye /></Small><Small><Funnel /></Small><Small><ExprFilter /></Small>
      <span className="ml-[3px] mr-[5px] border-x-8 border-t-8 border-x-transparent border-t-[#b4b4b4]" />
      <Small><TreeArrow /></Small><Small><TreeArrow up /></Small><Small><RemoveLayer /></Small>
    </div>
    <div className="grow border border-b-0 border-t-2 border-[#292929] bg-[#1e1e1e]">
      <div className="flex h-9 items-center bg-[#464646] pl-[47px]">
        <div className="flex size-7 items-center justify-center rounded-sm border-2 border-[#2a2a2a] bg-[#1e1e1e]">
          <svg width="20" height="20" viewBox="0 0 20 20" fill="none" stroke="#c8c8c8" strokeWidth="2.600"><path d="M3 10l5 8L16 2" /></svg>
        </div>
        <div className="ml-[13px] size-[31px] border-2 border-[#8d5571] bg-[#b86d8e]" />
        <span className="ml-[12px] whitespace-nowrap border-b-[3px] border-white text-[26px] font-bold leading-[28px] text-white">boundary uncompahgre</span>
      </div>
    </div>
  </aside>
);

/* ---------- map ---------- */

const place = (ox: number, oy: number, sx: number, sy: number, pts: Pt[]) =>
  pts.map(([x, y]) => `${(ox + x / sx).toFixed(1)},${(oy + y / sy).toFixed(1)}`).join(" ");
const north = (p: Pt[]) => place(1280, 300, 3, 3, p);
const middle = (p: Pt[]) => place(1420, 500, 2.306, 2.45, p);
const south = (p: Pt[]) => place(1660, 1100, 2.45, 2.6133, p);

const OUTLINE = [
  north([[81,232],[144,201],[263,213],[305,183],[391,181],[457,208],[465,164],[681,158],[722,128],[842,140],[882,109],[1001,122],[1043,91],[1162,102],[1225,72],[1239,145],[1304,172],[1300,305],[1409,361],[1368,391],[1248,380],[1207,410],[1272,437],[1335,407],[1467,463],[1512,520],[1472,579],[1537,606],[1539,667]]),
  middle([[920,112],[914,173],[973,231],[942,256],[1001,290],[1023,434],[1083,492],[1077,553],[1137,634],[1131,671],[1165,693],[1159,755],[1271,883],[1264,920],[1298,942],[1292,1003],[1325,1025],[1319,1062],[1377,1073],[1346,1122],[1379,1144],[1381,1192],[1431,1191],[1400,1240],[1433,1263],[1402,1288],[1460,1298],[1438,1358],[1486,1357],[1455,1383],[1488,1406],[1482,1466],[1515,1489],[1510,1526]]),
  south([[1080,147],[1073,185],[1136,248],[1103,274],[1165,310],[1158,350],[1250,475],[1217,527],[1296,538],[1273,602],[1333,614],[1301,666],[1363,702],[1358,793],[1394,817],[1388,881],[1423,906],[1391,957],[1394,1060],[1429,1085],[1397,1137],[1459,1174],[1435,1213],[1506,1236],[1542,1287],[1509,1313],[1544,1337],[1546,1389],[1494,1390],[1460,1417],[1415,1406],[1382,1432],[1337,1421],[1303,1447],[1258,1436],[1225,1461],[1180,1450],[1120,1490],[1076,1479],[1017,1518],[972,1507],[912,1547],[841,1523],[808,1549],[763,1537],[727,1487],[759,1436],[723,1411],[722,1359],[669,1335],[702,1309],[666,1259],[672,1194],[619,1195],[556,1108],[588,1082],[584,928],[548,904],[552,813],[517,789],[550,763],[472,751],[487,700],[444,714],[442,662],[389,639],[378,575],[307,552],[304,499],[267,449],[214,427],[193,324],[130,287],[136,223],[74,186],[107,160],[46,123],[78,71]]),
  middle([[566,1454],[572,1417],[514,1360],[545,1335],[495,1335],[461,1289],[491,1241],[442,1241],[408,1194],[414,1158],[381,1135],[388,1099],[327,1017],[359,992],[309,969],[274,922],[306,897],[256,875],[245,814],[194,793],[200,708],[166,685],[197,660],[138,602],[144,541],[85,507],[116,458],[65,436],[64,387],[4,330],[9,268]]),
  north([[518,927],[559,867],[493,840],[399,886],[355,858],[384,813],[319,786],[360,755],[282,654],[345,623],[385,564],[321,564],[320,535],[403,504],[470,531],[510,472],[595,440],[694,482],[706,525],[792,523],[832,493],[758,480],[788,407],[724,437],[692,423],[700,378],[764,348],[698,321],[658,380],[669,423],[638,439],[562,397],[634,351],[558,309],[622,307],[621,278],[501,238],[429,283],[341,285],[341,256],[403,225],[307,213],[299,288],[184,362],[74,306]]),
].join(" ");
const HOLES = [
  north([[1117,324],[1181,323],[1141,382],[1108,369]]),
  north([[511,721],[606,705],[618,748],[651,762],[610,792],[524,795]]),
];
const ISLAND = north([[219,434],[338,446],[401,416],[403,474],[349,462],[276,507],[221,493]]);
const SHAPE = [OUTLINE, ...HOLES, ISLAND].map((p) => `M${p}Z`).join(" ");

const MapCanvas = () => (
  <main className="mr-[2px] min-w-0 grow bg-white">
    <svg width="2336" height="1620" viewBox="602 158 2336 1620" className="block">
      <path d={SHAPE} fill="#e8718d" fillRule="evenodd" stroke="#232323" strokeWidth="1.600" strokeLinejoin="bevel" />
    </svg>
  </main>
);

/* ---------- status bar ---------- */

const Spinner = () => (
  <div className="flex h-full w-7 shrink-0 flex-col items-center justify-center gap-[10px] rounded-r-md border border-[#5a5a5a] bg-[#444]">
    <span className="border-x-[7px] border-b-8 border-x-transparent border-b-[#b4b4b4]" />
    <span className="border-x-[7px] border-t-8 border-x-transparent border-t-[#b4b4b4]" />
  </div>
);

const StatusBar = () => (
  <footer className="flex h-[62px] shrink-0 items-center whitespace-nowrap border-t border-[#262626] bg-[#323232] pb-0 pt-[2px] text-[22.5px] leading-none text-[#f2f2f2]">
    <div className="ml-2 flex h-12 w-[432px] shrink-0 items-center rounded-md border-2 border-[#282828] bg-[#1e1e1e] text-[#8f8f8f]">
      <svg width="28" height="28" viewBox="0 0 28 28" className="ml-[14px]" fill="none" stroke="#9a9a9a" strokeWidth="2.200"><circle cx="12" cy="11" r="9" /><path d="M18 18l7 7" strokeWidth="3" /></svg>
      <span className="ml-[14px] text-[25.5px]">Type to locate (⌘K)</span>
    </div>
    <span className="ml-4 w-[717px] shrink-0 text-black">Ready</span>
    <span className="w-[122px] shrink-0">Coordinate</span>
    <div className="flex h-11 w-[246px] shrink-0 items-center justify-center rounded-md border-2 border-[#282828] bg-[#1e1e1e] text-[23px] tracking-[0.7px]">-108.0797,38.1201</div>
    <svg width="32" height="34" viewBox="0 0 32 34" className="ml-[11px] shrink-0" fill="none">
      <path d="M4 6c3-5 9-6 12-1l9 12c7 8 5 15-2 16-6 1-9-3-11-8L5 15C3 12 3 9 4 6z" fill="#111" stroke="#b9adab" strokeWidth="1.400" />
      <path d="M6 5l4 10c2 2 4 1 4-1L11 3" stroke="#fff" strokeWidth="2.400" />
      <path d="M8 18c4-3 8-3 10 0" stroke="#fff" strokeWidth="1.800" />
      <ellipse cx="19" cy="25" rx="6" ry="7" fill="#f4f4f4" stroke="#111" strokeWidth="1.500" />
      <circle cx="19" cy="26" r="2.200" stroke="#111" strokeWidth="1.500" />
      <path d="M24 8l2-2M28 3l2-1M26 10l3-1M1 21l2 1" stroke="#111" strokeWidth="2.500" />
    </svg>
    <span className="ml-[23px] w-[65px] shrink-0">Scale</span>
    <div className="flex h-12 w-[184px] shrink-0 items-center overflow-hidden rounded-md border-2 border-[#282828] bg-[#1e1e1e] shadow-[inset_0_0_0_1px_#4a4a4a]">
      <span className="w-[141px] shrink-0 pl-[6px]">1:98600</span>
      <div className="flex h-full grow items-center justify-center rounded-r border border-[#5f5f5f] bg-gradient-to-b from-[#4c4c4c] to-[#404040]">
        <span className="border-x-[8px] border-t-8 border-x-transparent border-t-[#1c1c1c]" />
      </div>
    </div>
    <svg width="26" height="32" viewBox="0 0 26 32" className="ml-6 shrink-0" fill="none">
      <path d="M5 16V9c0-9 16-9 16 0v7" stroke="#b5b5b0" strokeWidth="3" /><rect x="1" y="14" width="24" height="17" rx="2" fill="#707070" />
    </svg>
    <span className="ml-[18px] w-[106px] shrink-0">Magnifier</span>
    <div className="flex h-12 w-[193px] shrink-0 items-center justify-between rounded-md border-2 border-[#282828] bg-[#1e1e1e]"><span className="pl-[7px]">100%</span><Spinner /></div>
    <span className="ml-[18px] w-[107px] shrink-0">Rotation</span>
    <div className="flex h-[46px] w-[185px] shrink-0 items-center justify-between rounded-md border-2 border-[#282828] bg-[#1e1e1e]"><span className="pl-[8px] tracking-[0.5px]">0.0 °</span><Spinner /></div>
    <div className="ml-3 flex size-7 shrink-0 items-center justify-center border-2 border-[#282828] bg-[#1e1e1e]">
      <svg width="20" height="20" viewBox="0 0 20 20" fill="none" stroke="#c8c8c8" strokeWidth="2.600"><path d="M3 10l5 8L16 2" /></svg>
    </div>
    <span className="ml-[10px] w-[106px] shrink-0 text-[#dedede]">Render</span>
    <svg width="30" height="30" viewBox="0 0 30 30" className="shrink-0" fill="none">
      <path d="M10 1h10l5 5 4 8-2 2-2 1H5l-2-1-2-2 4-8zM5 18h20c-1 7-5 11-10 11S6 25 5 18z" fill="#b9b9b9" />
      <path d="M15 0v30M10 1c-3 8-3 20 0 28M20 1c3 8 3 20 0 28M4 10h22M5 18h20M6 23h18M7 5h16" stroke="#505050" strokeWidth="1.100" />
      <path d="M1 14h28" stroke="#999" strokeWidth="2.500" />
    </svg>
    <span className="ml-[6px] w-[168px] shrink-0 text-[#dedede]">EPSG:4326</span>
    <svg width="34" height="32" viewBox="0 0 34 32" className="shrink-0" fill="none">
      <path d="M17 1c9 0 16 5 16 12 0 5-3 8-6 10 0 4 2 6 4 8-6 0-9-2-12-6C8 25 1 20 1 13S8 1 17 1z" fill="#727272" />
      <circle cx="9" cy="13" r="2.300" fill="#f4f4f4" /><circle cx="17" cy="13" r="2.300" fill="#f4f4f4" /><circle cx="25" cy="13" r="2.300" fill="#f4f4f4" />
    </svg>
  </footer>
);

export default function App() {
  return (
    <div className="flex h-[1840px] w-[2940px] flex-col overflow-hidden bg-[#323232] font-['Inter','Noto_Sans',sans-serif]">
      <Toolbars />
      <div className="flex h-[1620px] shrink-0">
        <Docks />
        <div className="flex w-[15px] shrink-0 flex-col items-center justify-center gap-[2px] border-r-2 border-[#292929] pl-1 pt-[5px]">
          {Array.from({ length: 6 }, (_, i) => <span key={i} className="size-1 bg-[#777]" />)}
        </div>
        <MapCanvas />
      </div>
      <StatusBar />
    </div>
  );
}
